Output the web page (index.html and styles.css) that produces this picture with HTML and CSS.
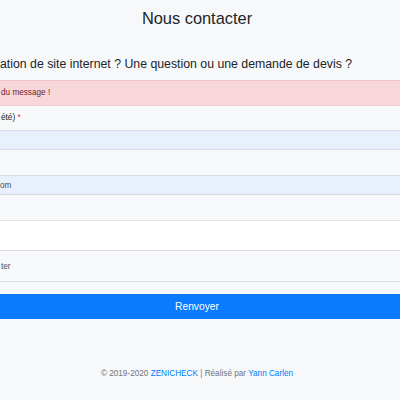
FILE: index.html
```html
<!DOCTYPE html>
<html lang="fr">
<head>
    <meta charset="utf-8">
    <title>Nous contacter - Zenicheck</title>
    <link rel="stylesheet" href="styles.css">
</head>
<body>
    <div class="page">
        <h1 class="titre">Nous contacter</h1>

        <form class="contact_c">
            <h4 class="accroche">ation de site internet ? Une question ou une demande de devis ?</h4>

            <div class="alerte">du message !</div>

            <label class="champ_label" for="nom">été) <span class="requis">*</span></label>
            <input class="champ auto" type="text" id="nom" value="">

            <label class="champ_label lab2" for="email"></label>
            <input class="champ auto" type="text" id="email" value="om">

            <label class="champ_label lab2" for="message"></label>
            <textarea class="champ zone" id="message"></textarea>

            <input class="champ haut" type="text" id="rappel" value="ter">

            <button class="bouton" type="button">Renvoyer</button>
        </form>

        <footer class="pied">
            &copy; 2019-2020 <a href="#">ZENICHECK</a> | Réalisé par <a href="#">Yann Carlen</a>
        </footer>
    </div>
</body>
</html>
```

FILE: styles.css
```css
html, body { margin: 0; padding: 0; background-color: #f7f8fa; }
body { font-family: "Liberation Sans", Arial, sans-serif; font-size: 8.2px; color: #212529; }

.page { width: 400px; }
.titre { margin: 0 6px 0 0; padding-top: 8px; height: 20px; font-size: 16.4px; font-weight: normal; line-height: 20px; text-align: center; }

.contact_c { display: flex; flex-direction: column; }
.accroche { margin: 28px 0 8px 0; font-size: 12.3px; font-weight: normal; line-height: 16px; }

.alerte { height: 26px; box-sizing: border-box; padding: 0 1px; line-height: 24px; background-color: #f8d7da; color: #721c24; border-top: 1px solid #f2c4c9; border-bottom: 1px solid #f5ccd0; }

.champ_label { height: 24px; padding-left: 1px; line-height: 24px; }
.lab2 { height: 25px; }
.requis { color: #dc3545; }

.champ { display: block; box-sizing: border-box; width: 100%; margin: 0; padding: 0; border: none; border-top: 1px solid #d9dde3; border-bottom: 1px solid #d9dde3; font-family: "Liberation Sans", Arial, sans-serif; font-size: 8.2px; color: #495057; background-color: #f7f8fa; outline: none; }
.auto { height: 20px; background-color: #e8f0fe; }
.zone { height: 31px; background-color: #ffffff; resize: none; border-top-color: #dfe2e6; }
.haut { height: 31px; border-top: none; padding-left: 1px; }

.bouton { margin: 12px 0 0 0; height: 25px; border: none; background-color: #0a7bff; color: #ffffff; font-family: "Liberation Sans", Arial, sans-serif; font-size: 10.25px; padding: 0 6px 0 0; }

.pied { margin: 49px 6px 0 0; text-align: center; color: #6c757d; line-height: 12px; }
.pied a { color: #007bff; text-decoration: none; }
```
